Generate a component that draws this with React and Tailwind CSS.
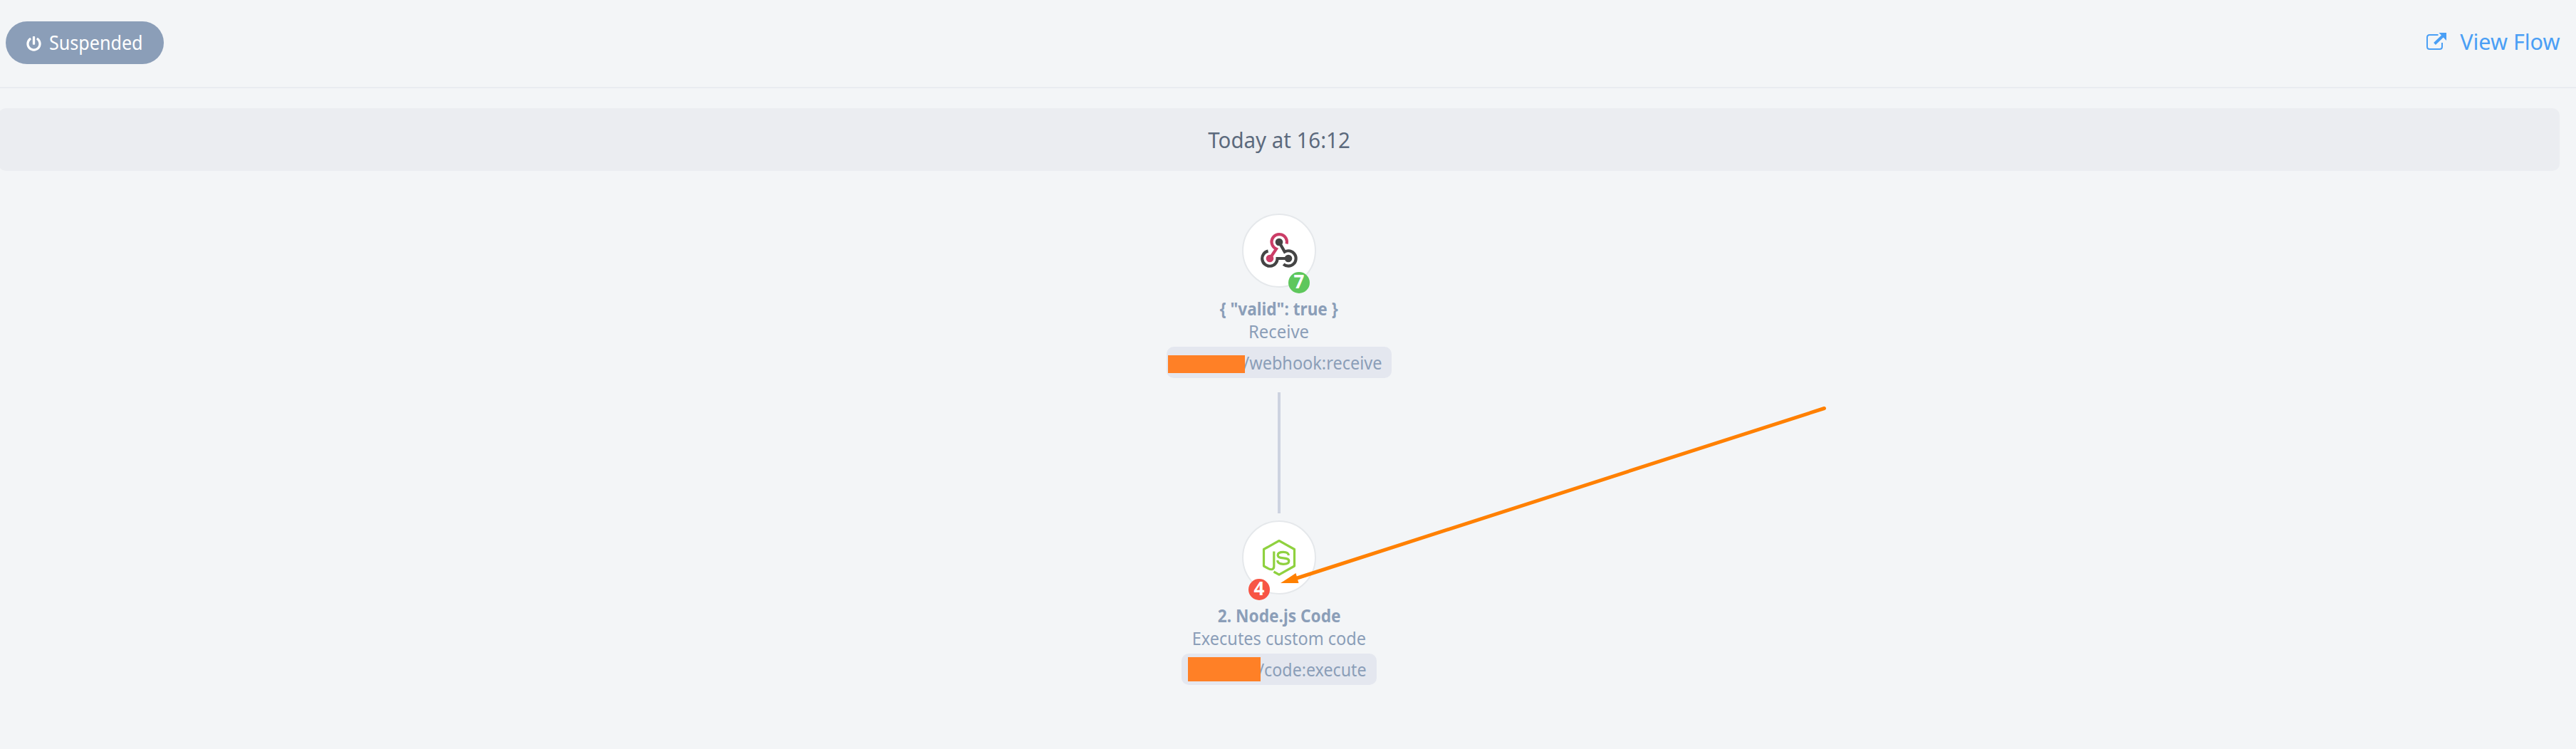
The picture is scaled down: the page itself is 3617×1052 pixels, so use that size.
import { FaPowerOff } from "react-icons/fa";

function WebhookIcon() {
  return (
    <svg viewBox="0 0 56 56" className="size-14" fill="none" strokeWidth="4.2">
      <path d="M38.6 18.4A10.7 10.7 0 1 0 24 25.6L15 39" stroke="#cb3d67" />
      <circle cx="15" cy="39" r="5.3" fill="#cb3d67" />
      <path d="M12.6 28.6A10.7 10.7 0 1 0 25.6 39H41" stroke="#444" />
      <path d="M28 16L35.8 29.6A10.7 10.7 0 1 1 34.1 47.2" stroke="#444" />
      <circle cx="28" cy="16" r="5.3" fill="#444" />
      <circle cx="41" cy="39" r="5.3" fill="#444" />
    </svg>
  );
}

function NodeIcon() {
  return (
    <svg viewBox="0 0 56 56" className="size-14" fill="none" stroke="#8fd13f" strokeWidth="3.2" strokeLinejoin="round">
      <path d="M20.5 48L28 52.2L49.5 40V16.5L28 4.5L6.5 16.5V40L13 43.6C17.5 46 20.8 44.5 20.8 40.5V19.5" />
      <path d="M41.5 25C41 21.5 38.5 20.3 34 20.3C29 20.3 26.2 21.6 26.2 24.6C26.2 28 29 28.4 34 28.9C39 29.4 41.8 30 41.8 33C41.8 36.2 39 37.3 34 37.3C29 37.3 26 36 25.6 32" />
    </svg>
  );
}

function FlowNode({ icon, badge, badgeClass, title, titleClass, subtitle, subtitleClass, tag, tagClass, tagTextClass, maskClass }) {
  return (
    <div className="flex flex-col items-center text-[25px] leading-8 whitespace-nowrap text-[#8b9eb8]">
      <div className="relative flex size-[104px] items-center justify-center rounded-full border-2 border-[#e5e8eb] bg-white">
        {icon}
        <span className={`absolute top-20 size-[30px] rounded-full text-center text-[26px] leading-[26px] font-bold text-white ${badgeClass}`}>{badge}</span>
      </div>
      <div className={`mt-[13px] font-bold ${titleClass}`}>{title}</div>
      <div className={subtitleClass}>{subtitle}</div>
      <div className={`relative mt-1.5 flex h-11 justify-end rounded-[10px] bg-[#e4e7ef] leading-[44px] ${tagClass}`}>
        <span className={`origin-right ${tagTextClass}`}>{tag}</span>
        <span className={`absolute bg-[#ff8026] ${maskClass}`} />
      </div>
    </div>
  );
}

export default function App() {
  return (
    <div className="relative h-[1052px] w-[3617px] overflow-hidden bg-[#f3f5f7] font-['Noto_Sans',sans-serif]">
      <header className="flex h-[124px] items-start justify-between border-b-2 border-[#e9ecf0] pt-[30px] pr-[23px] pl-2">
        <div className="flex h-[60px] w-[222px] items-center rounded-[30px] bg-[#8b9eb8] pl-[29px] text-[27px] text-white">
          <FaPowerOff className="mt-0.5 size-[21px]" />
          <span className="mt-px ml-[11px] origin-left scale-x-[.93]">Suspended</span>
        </div>
        <a className="flex h-14 items-center text-[31px] text-[#4a9ff5]">
          <svg viewBox="0 0 30 26" className="mr-[16px] h-[26px] w-[30px]" fill="none" stroke="currentColor">
            <path d="M17.5 4H5.5Q2 4 2 7.500V20.500Q2 24 5.500 24H19.500Q23 24 23 20.500V15" strokeWidth="2" />
            <path d="M12.500 16.500L25 4.500" strokeWidth="4" />
            <path d="M18.500 1H29V12Z" fill="currentColor" stroke="none" />
          </svg>
          <span className="origin-right scale-x-[.985]">View Flow</span>
        </a>
      </header>
      <main className="mt-7 mr-[23px] -ml-0.5 flex flex-col items-center">
        <div className="mb-[60px] flex h-[88px] w-full justify-center rounded-[10px] bg-[#ebedf1] text-[31px] leading-[88px] text-[#5c6a7d]">
          <span className="scale-x-[.95]">Today at 16:12</span>
        </div>
        <FlowNode
          icon={<WebhookIcon />}
          badge="7"
          badgeClass="left-[63px] bg-[#5ec75c]"
          title={'{ "valid": true }'}
          titleClass="scale-x-[.905]"
          subtitle="Receive"
          subtitleClass="scale-x-[.955]"
          tag="/webhook:receive"
          tagClass="w-[316px] pr-[14px]"
          tagTextClass="scale-x-[.94]"
          maskClass="top-3 left-0.5 h-[25px] w-[108px]"
        />
        <div className="mt-5 mb-2.5 h-[170px] w-1 bg-[#cdd3e0]" />
        <FlowNode
          icon={<NodeIcon />}
          badge="4"
          badgeClass="left-[7px] bg-[#f75545]"
          title="2. Node.js Code"
          titleClass="scale-x-[.907]"
          subtitle="Executes custom code"
          subtitleClass="scale-x-[.94]"
          tag="/code:execute"
          tagClass="w-[274px] pr-[14px]"
          tagTextClass="scale-x-[.93]"
          maskClass="top-[5px] left-[9px] h-[34px] w-[102px]"
        />
      </main>
      <svg viewBox="0 0 770 252" className="absolute top-[570px] left-[1796px] h-[252px] w-[770px]">
        <path d="M22 243L765.500 3.500" stroke="#ff8000" strokeWidth="5" strokeLinecap="round" />
        <path d="M2 249L23.500 235L27.500 249Z" fill="#ff8000" />
      </svg>
    </div>
  );
}
